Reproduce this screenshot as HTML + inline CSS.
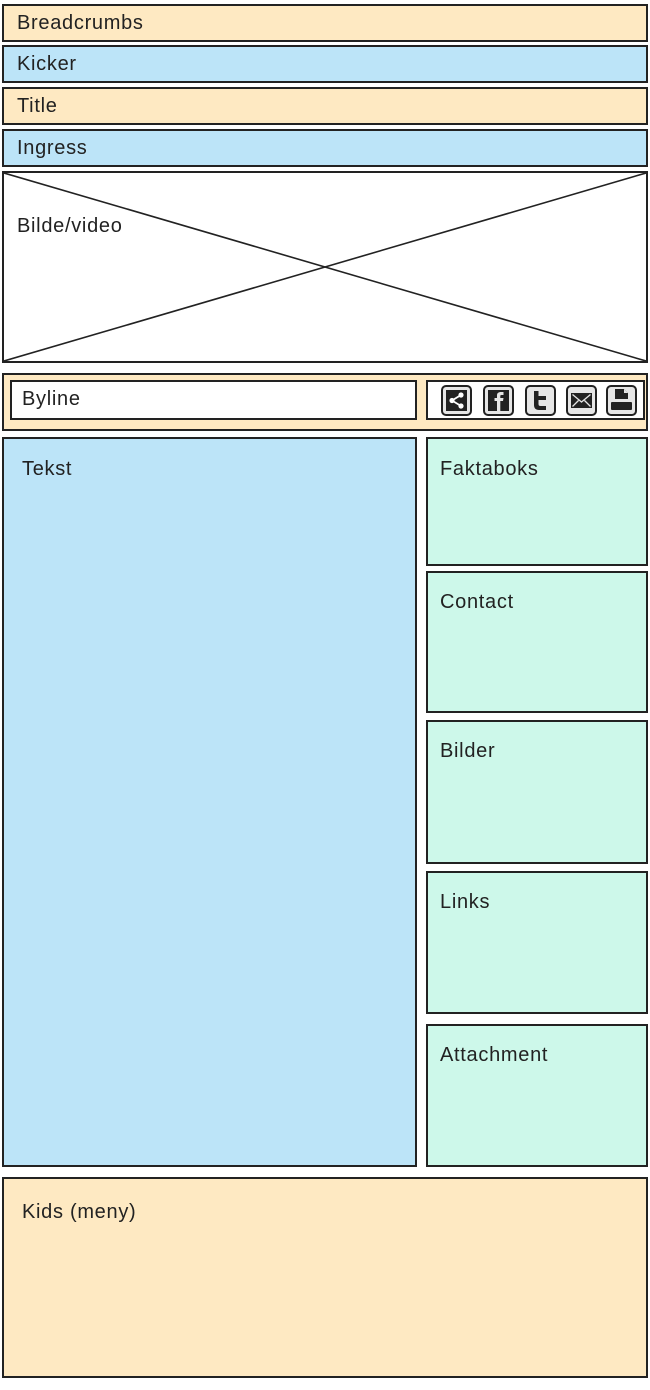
<!DOCTYPE html>
<html><head><meta charset="utf-8"><style>
*{box-sizing:border-box;margin:0;padding:0}
body{width:650px;height:1390px;background:#fff;position:relative;font-family:"Liberation Sans",Arial,sans-serif;font-size:20px;letter-spacing:0.7px;color:#222;overflow:hidden}
.b{position:absolute;border:2px solid #222}
.o{background:#fee9c2}.c{background:#bce4f8}.g{background:#cdf8ea}.w{background:#fff}
.t{position:absolute;white-space:nowrap}
.ic{position:absolute;top:385px;width:31px;height:31px}
</style></head><body>
<div class="b o" style="left:2px;top:4px;width:646px;height:38px"><span class="t" style="left:13px;top:6px">Breadcrumbs</span></div>
<div class="b c" style="left:2px;top:45px;width:646px;height:38px"><span class="t" style="left:13px;top:6px">Kicker</span></div>
<div class="b o" style="left:2px;top:87px;width:646px;height:38px"><span class="t" style="left:13px;top:6px">Title</span></div>
<div class="b c" style="left:2px;top:129px;width:646px;height:38px"><span class="t" style="left:13px;top:6px">Ingress</span></div>
<div class="b w" style="left:2px;top:171px;width:646px;height:192px">
<svg width="642" height="188" style="position:absolute;left:0;top:0"><line x1="0" y1="0" x2="642" y2="188" stroke="#222" stroke-width="1.6"/><line x1="642" y1="0" x2="0" y2="188" stroke="#222" stroke-width="1.6"/></svg>
<span class="t" style="left:13px;top:42px">Bilde/video</span></div>
<div class="b o" style="left:2px;top:373px;width:646px;height:58px"></div>
<div class="b w" style="left:10px;top:380px;width:407px;height:40px"><span class="t" style="left:10px;top:6px">Byline</span></div>
<div class="b w" style="left:426px;top:380px;width:219px;height:40px"></div>
<svg class="ic" style="left:441px" viewBox="0 0 31 31"><rect x="1" y="1" width="29" height="29" rx="4" fill="#e6e6e6" stroke="#222" stroke-width="2"/><rect x="5" y="5" width="21" height="21" fill="#222"/><circle cx="20" cy="10" r="2.6" fill="#fff"/><circle cx="11" cy="15.5" r="2.6" fill="#fff"/><circle cx="20" cy="21" r="2.6" fill="#fff"/><path d="M20 10L11 15.5L20 21" stroke="#fff" stroke-width="1.8" fill="none"/></svg>
<svg class="ic" style="left:483px" viewBox="0 0 31 31"><rect x="1" y="1" width="29" height="29" rx="4" fill="#e6e6e6" stroke="#222" stroke-width="2"/><rect x="5" y="5" width="21" height="21" fill="#222"/><path d="M14 26V16H11.5V13H14V10.5C14 8 15.5 7 18 7H20.5V10H18.5C17.6 10 17.3 10.4 17.3 11.2V13H20.5L20 16H17.3V26Z" fill="#e6e6e6"/></svg>
<svg class="ic" style="left:525px" viewBox="0 0 31 31"><rect x="1" y="1" width="29" height="29" rx="4" fill="#e6e6e6" stroke="#222" stroke-width="2"/><path d="M9 6H13.5V11H21V15H13.5V19C13.5 20.5 14.3 21 15.5 21H21V25H14C10.8 25 9 23.3 9 20Z" fill="#222"/></svg>
<svg class="ic" style="left:566px" viewBox="0 0 31 31"><rect x="1" y="1" width="29" height="29" rx="4" fill="#e6e6e6" stroke="#222" stroke-width="2"/><rect x="5" y="8" width="21" height="15" fill="#222"/><path d="M6.5 9.5L15.5 17L24.5 9.5M6.5 21.5L12.5 15.5M24.5 21.5L18.5 15.5" stroke="#e6e6e6" stroke-width="1.3" fill="none"/></svg>
<svg class="ic" style="left:606px" viewBox="0 0 31 31"><rect x="1" y="1" width="29" height="29" rx="4" fill="#e6e6e6" stroke="#222" stroke-width="2"/><path d="M9 4H18L22 8V14H9Z" fill="#222"/><path d="M18 4V8H22" fill="#e6e6e6"/><rect x="5" y="17" width="21" height="8" rx="1" fill="#222"/></svg>
<div class="b c" style="left:2px;top:437px;width:415px;height:730px"><span class="t" style="left:18px;top:19px">Tekst</span></div>
<div class="b g" style="left:426px;top:437px;width:222px;height:129px"><span class="t" style="left:12px;top:19px">Faktaboks</span></div>
<div class="b g" style="left:426px;top:571px;width:222px;height:142px"><span class="t" style="left:12px;top:18px">Contact</span></div>
<div class="b g" style="left:426px;top:720px;width:222px;height:144px"><span class="t" style="left:12px;top:18px">Bilder</span></div>
<div class="b g" style="left:426px;top:871px;width:222px;height:143px"><span class="t" style="left:12px;top:18px">Links</span></div>
<div class="b g" style="left:426px;top:1024px;width:222px;height:143px"><span class="t" style="left:12px;top:18px">Attachment</span></div>
<div class="b o" style="left:2px;top:1177px;width:646px;height:201px"><span class="t" style="left:18px;top:22px">Kids (meny)</span></div>
</body></html>
